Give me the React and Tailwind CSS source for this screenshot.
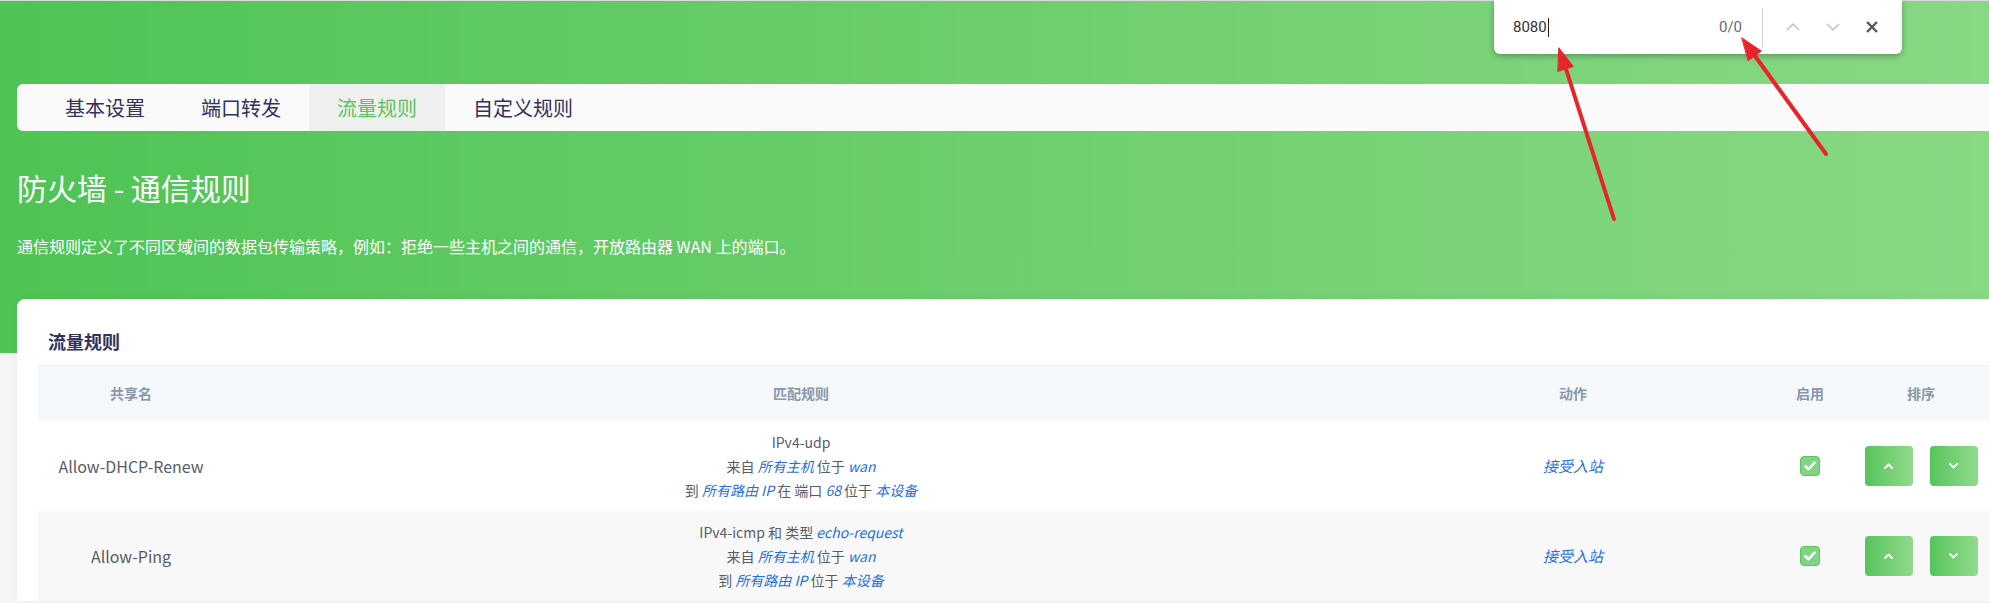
import React from 'react';

const tabs = ['基本设置', '端口转发', '流量规则', '自定义规则'];

function L({ children }) {
  return <span className="italic text-[#1f6fe0]">{children}</span>;
}

const rules = [
  {
    name: 'Allow-DHCP-Renew',
    lines: [
      <>IPv4-udp</>,
      <>来自 <L>所有主机</L> 位于 <L>wan</L></>,
      <>到 <L>所有路由 IP</L> 在 端口 <L>68</L> 位于 <L>本设备</L></>,
    ],
  },
  {
    name: 'Allow-Ping',
    lines: [
      <>IPv4-icmp 和 类型 <L>echo-request</L></>,
      <>来自 <L>所有主机</L> 位于 <L>wan</L></>,
      <>到 <L>所有路由 IP</L> 位于 <L>本设备</L></>,
    ],
  },
];

const cols = 'grid grid-cols-[186px_1154px_390px_84px_138px] items-center';

function Checkbox() {
  return (
    <div className="flex h-5 w-5 items-center justify-center rounded-[4px] border-[1.5px] border-[#5cc461] bg-[#80d483]">
      <svg width="12" height="10" viewBox="0 0 12 10">
        <path d="M1.5 5.2 L4.6 8.2 L10.5 1.6" fill="none" stroke="#fff" strokeWidth="2.6" strokeLinecap="round" strokeLinejoin="round" />
      </svg>
    </div>
  );
}

function SortButton({ up }) {
  return (
    <button className="flex h-10 w-12 items-center justify-center rounded-[4px] bg-linear-to-r from-[#55c45b] to-[#91da8c]">
      <svg width="9" height="6" viewBox="0 0 9 6">
        <path d={up ? 'M1 5 L4.5 1.5 L8 5' : 'M1 1 L4.5 4.5 L8 1'} fill="none" stroke="#fff" strokeWidth="1.8" strokeLinecap="round" strokeLinejoin="round" />
      </svg>
    </button>
  );
}

export default function App() {
  return (
    <div className="relative h-[603px] w-[1989px] overflow-hidden bg-[#f4f5f7] font-['Noto_Sans_CJK_SC','Noto_Sans',sans-serif]">
      <div className="h-px bg-[#d9dcd9]" />

      {/* green header */}
      <div className="h-[352px] bg-linear-to-r from-[#4dc454] to-[#88d884] pl-[17px] pt-[83px]">
        <div className="flex h-[47px] items-stretch rounded-l-md bg-[#fafafa] pl-5">
          {tabs.map((t, i) => (
            <div
              key={t}
              className={`flex items-center px-[28px] text-[20px] ${
                i === 2 ? 'bg-[#efefef] text-[#5cc45f]' : 'text-[#32325d]'
              }`}
            >
              {t}
            </div>
          ))}
        </div>
        <h1 className="mt-[36px] text-[30px] leading-[40px] text-white">防火墙 - 通信规则</h1>
        <p className="mt-[27px] text-[16px] leading-[24px] text-white">
          通信规则定义了不同区域间的数据包传输策略，例如：拒绝一些主机之间的通信，开放路由器 WAN 上的端口。
        </p>
      </div>

      {/* card */}
      <div className="-mt-[54px] ml-[17px] rounded-tl-lg bg-white pl-[21px] pt-[29px] shadow-[0_0_12px_rgba(0,0,0,0.04)]">
        <h3 className="mb-[11px] pl-[10px] text-[18px] font-semibold leading-[26px] text-[#32325d]">流量规则</h3>
        <div className="border-t border-[#eceef1]">
          <div className={`${cols} h-[55px] bg-[#f6f9fc] text-center text-[14px] font-semibold text-[#8898aa]`}>
            <div>共享名</div>
            <div>匹配规则</div>
            <div>动作</div>
            <div>启用</div>
            <div>排序</div>
          </div>
          {rules.map((r, i) => (
            <div key={r.name} className={`${cols} h-[90px] text-center ${i % 2 ? 'bg-[#f8f8f8]' : 'bg-white'}`}>
              <div className="text-[16px] text-[#585c66]">{r.name}</div>
              <div className="text-[14px] leading-[24px] text-[#585c66]">
                {r.lines.map((l, j) => (
                  <div key={j}>{l}</div>
                ))}
              </div>
              <div className="text-[15px]">
                <L>接受入站</L>
              </div>
              <div className="flex justify-center">
                <Checkbox />
              </div>
              <div className="flex justify-center gap-[17px]">
                <SortButton up />
                <SortButton />
              </div>
            </div>
          ))}
        </div>
      </div>

      {/* browser find bar */}
      <div className="absolute left-[1494px] top-0 flex h-[54px] w-[408px] items-center rounded-b-md bg-white pl-[19px] shadow-[0_2px_6px_rgba(0,0,0,0.3)] font-['Roboto',sans-serif]">
        <div className="flex w-[206px] items-center text-[15px] text-[#333]">
          8080
          <span className="ml-px inline-block h-[19px] w-px bg-[#222]" />
        </div>
        <div className="w-[43px] text-[15px] text-[#5f6b7a]">0/0</div>
        <div className="h-[39px] w-px bg-[#d4d4d4]" />
        <div className="ml-[23px] flex w-[40px] items-center">
          <svg width="14" height="8" viewBox="0 0 14 8">
            <path d="M1 7 L7 1.2 L13 7" fill="none" stroke="#c4c4c4" strokeWidth="1.6" />
          </svg>
        </div>
        <div className="flex w-[40px] items-center">
          <svg width="14" height="8" viewBox="0 0 14 8">
            <path d="M1 1 L7 6.8 L13 1" fill="none" stroke="#c4c4c4" strokeWidth="1.6" />
          </svg>
        </div>
        <svg width="12" height="12" viewBox="0 0 12 12">
          <path d="M1 1 L11 11 M11 1 L1 11" fill="none" stroke="#555" strokeWidth="2.4" />
        </svg>
      </div>

      {/* annotation arrows */}
      <svg className="pointer-events-none absolute left-0 top-0" width="1989" height="603">
        <g stroke="#e8242b" strokeWidth="4" strokeLinecap="round" fill="#e8242b">
          <line x1="1614" y1="219" x2="1566" y2="69" />
          <polygon points="1559,48 1573.3,66.5 1558.1,71.3" strokeWidth="1" strokeLinejoin="round" />
          <line x1="1826" y1="154" x2="1755" y2="56" />
          <polygon points="1742,38 1761.4,51.1 1748.4,60.5" strokeWidth="1" strokeLinejoin="round" />
        </g>
      </svg>
    </div>
  );
}
